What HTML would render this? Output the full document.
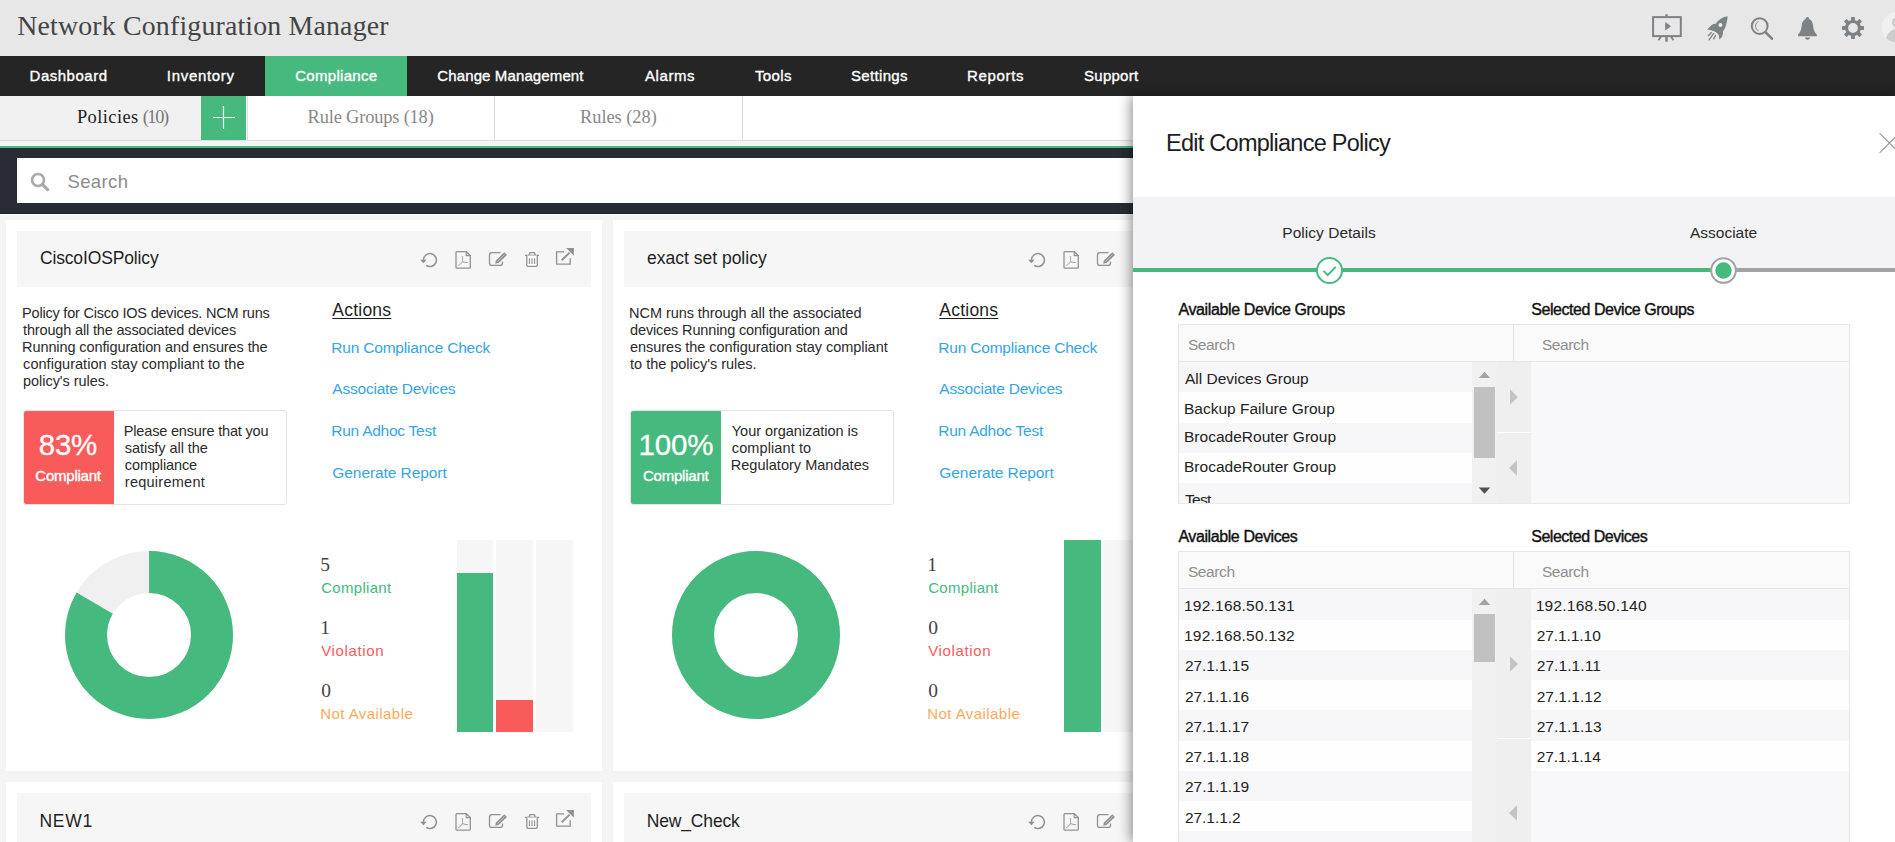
<!DOCTYPE html>
<html lang="en">
<head>
<meta charset="utf-8">
<title>Network Configuration Manager</title>
<style>
*{box-sizing:border-box;margin:0;padding:0}
html,body{width:1895px;height:842px;overflow:hidden}
body{position:relative;background:#f4f4f5;font-family:"Liberation Sans",sans-serif;color:#222;font-size:14px}
.a{position:absolute}
.t{position:absolute;white-space:nowrap;line-height:1}
svg{position:absolute;overflow:visible}
#hdr{left:0;top:0;width:1895px;height:56px;background:#e7e7e8}
#nav{left:0;top:56px;width:1895px;height:40px;background:#252525}
#tabs{left:0;top:96px;width:1133px;height:45px;background:#fff;border-bottom:1px solid #dcdcdc}
.sep{position:absolute;top:0;width:1px;height:44px;background:#dedede}
#strip{left:0;top:141px;width:1133px;height:5px;background:#f5f5f6}
#gline{left:0;top:146px;width:1133px;height:2px;background:#46b97e}
#sbar{left:0;top:148px;width:1133px;height:66px;background:#282c35;border-bottom:1px solid #1d2028;box-shadow:0 1px 0 #fff}
#sbox{left:17px;top:158px;width:1130px;height:45px;background:#fff}
.card{position:absolute;background:#fff;width:596px}
.chead{position:absolute;background:#f6f6f6;height:56px;width:574px}
.cbox{position:absolute;width:264px;height:95px;border:1px solid #e4e4e4;border-radius:3px;background:#fff;overflow:hidden}
.cbox i{position:absolute;left:-1px;top:-1px;width:91px;height:94px;display:block}
.bar{position:absolute;top:540px;width:37px;height:192px;background:#f6f6f6}
.bar.b1{width:36px}
.bar i{position:absolute;left:0;bottom:0;width:100%;display:block}
#panel{left:1133px;top:96px;width:762px;height:746px;background:#fff;box-shadow:-2px 0 12px rgba(0,0,0,.45)}
#steps{left:1133px;top:197px;width:762px;height:73px;background:#f3f3f5}
.dl{position:absolute;left:1178px;width:672px;border:1px solid #e6e6e6;background:#fafafa}
.stripe{position:absolute}
.trk{position:absolute;left:1472px;width:25px;background:#f1f1f1}
.acol{position:absolute;left:1497px;width:34px;background:#efefef}
.thumb{position:absolute;left:1474px;width:21px;background:#c1c1c1}
</style>
</head>
<body>
<header>
<div id="hdr" class="a"></div>
<div class="t" style="left:17.3px;top:10px;line-height:31px;font-size:27.8px;color:#444;font-family:'Liberation Serif',serif;letter-spacing:0.19px;">Network Configuration Manager</div>
<svg style="left:1650px;top:12px" width="34" height="32" viewBox="1650 12 34 32" fill="none" stroke="#7d8285">
<rect x="1653.1" y="17.1" width="27.7" height="19" stroke-width="2"/>
<path d="M1666.5 14.2V16.5M1666.5 37V41.7" stroke-width="2.4"/>
<path d="M1661 36.5L1658.6 40.3M1671 36.5L1673.4 40.3" stroke-width="1.8"/>
<path d="M1665.2 22L1671 26.3L1665.2 30.6Z" fill="#7d8285" stroke="none"/></svg>
<svg style="left:1706px;top:15px" width="23" height="27" viewBox="0 0 23 27">
<path d="M21.6 1.2C18.6 1.6 15.4 3 13.1 5C11.8 6.2 10.7 7.5 9.8 8.7C8.6 8.5 7.4 8.9 6.5 9.6C4.6 10.9 3.2 12.4 1.2 14.8C3.4 14.9 5.6 15.2 7.4 16.1C9.6 16.8 11.4 18.1 12.2 19.6C13.2 21 13.4 22.8 13.1 24.4C14.6 23.6 15.6 22.5 16.2 21.2C16.9 19.6 17.2 17.9 17 16.3C18.3 14.6 19.5 12.1 20.2 9.4C20.9 6.6 21.6 3.8 21.6 1.2Z" fill="#7d8285"/>
<circle cx="14.4" cy="10" r="1.9" fill="#f3f3f3"/>
<path d="M5.6 17.1L2.2 21M7.9 18.2L2.7 25.3M9.8 20.1L7.4 24.4" stroke="#7d8285" stroke-width="1.3" fill="none"/></svg>
<svg style="left:1749px;top:15px" width="26" height="27" viewBox="1749 15 26 27" fill="none" stroke="#7d8285">
<circle cx="1759.7" cy="26.05" r="7.9" stroke-width="2"/>
<path d="M1765.4 32.1L1771.9 38.7" stroke-width="2.6" stroke-linecap="round"/>
<path d="M1758.5 21.3C1754.6 23.6 1754.6 28.6 1758.5 31" stroke-width="1"/></svg>
<svg style="left:1796px;top:15px" width="23" height="27" viewBox="1796 15 23 27">
<path d="M1807.4 17C1806.2 17 1805.5 17.9 1805.6 19C1803.2 20 1802 22.6 1801.7 25.5C1801.4 29 1800.9 31.8 1798 34.4V36.3H1816.8V34.4C1813.9 31.8 1813.4 29 1813.1 25.5C1812.8 22.6 1811.6 20 1809.2 19C1809.3 17.9 1808.6 17 1807.4 17Z" fill="#7d8285"/>
<path d="M1805 37.4H1809.9C1809.9 38.7 1808.8 39.7 1807.45 39.7C1806.1 39.7 1805 38.7 1805 37.4Z" fill="#7d8285"/></svg>
<svg style="left:1840px;top:15px" width="26" height="26" viewBox="1840 15 26 26"><g transform="translate(1853 28)" fill="#7d8285"><rect x="-1.90" y="-11.00" width="3.8" height="4.20" rx="0.6" transform="rotate(0.0)"/><rect x="-1.90" y="-11.00" width="3.8" height="4.20" rx="0.6" transform="rotate(45.0)"/><rect x="-1.90" y="-11.00" width="3.8" height="4.20" rx="0.6" transform="rotate(90.0)"/><rect x="-1.90" y="-11.00" width="3.8" height="4.20" rx="0.6" transform="rotate(135.0)"/><rect x="-1.90" y="-11.00" width="3.8" height="4.20" rx="0.6" transform="rotate(180.0)"/><rect x="-1.90" y="-11.00" width="3.8" height="4.20" rx="0.6" transform="rotate(225.0)"/><rect x="-1.90" y="-11.00" width="3.8" height="4.20" rx="0.6" transform="rotate(270.0)"/><rect x="-1.90" y="-11.00" width="3.8" height="4.20" rx="0.6" transform="rotate(315.0)"/><path fill-rule="evenodd" d="M-8 0A8 8 0 1 0 8 0A8 8 0 1 0 -8 0ZM-4.9 0A4.9 4.9 0 1 1 4.9 0A4.9 4.9 0 1 1 -4.9 0Z"/></g></svg>
<svg style="left:1880px;top:11px" width="15" height="33" viewBox="1880 11 15 33"><defs><clipPath id="av"><circle cx="1896.7" cy="27.3" r="15.1"/></clipPath></defs>
<circle cx="1896.7" cy="27.3" r="15.1" fill="#f0f0f0"/><g clip-path="url(#av)" fill="#cdcdce"><circle cx="1896.7" cy="22.5" r="4.8"/><ellipse cx="1896.7" cy="40.6" rx="10.9" ry="11.6"/></g></svg>
</header>
<nav>
<div id="nav" class="a"><div class="a" style="left:265px;top:0;width:142px;height:40px;background:#46b97e"></div></div>
<div class="t" style="left:29.6px;top:67px;line-height:17px;font-size:15px;color:#fff;letter-spacing:0.5px;-webkit-text-stroke:0.35px #fff;">Dashboard</div>
<div class="t" style="left:166.8px;top:67px;line-height:17px;font-size:15px;color:#fff;letter-spacing:0.69px;-webkit-text-stroke:0.35px #fff;">Inventory</div>
<div class="t" style="left:295.2px;top:67px;line-height:17px;font-size:15px;color:#fff;letter-spacing:0.3px;-webkit-text-stroke:0.35px #fff;">Compliance</div>
<div class="t" style="left:437.3px;top:67px;line-height:17px;font-size:15px;color:#fff;letter-spacing:0.12px;-webkit-text-stroke:0.35px #fff;">Change Management</div>
<div class="t" style="left:645.0px;top:67px;line-height:17px;font-size:15px;color:#fff;letter-spacing:0.57px;-webkit-text-stroke:0.35px #fff;">Alarms</div>
<div class="t" style="left:755.0px;top:67px;line-height:17px;font-size:15px;color:#fff;letter-spacing:0.37px;-webkit-text-stroke:0.35px #fff;">Tools</div>
<div class="t" style="left:851.0px;top:67px;line-height:17px;font-size:15px;color:#fff;letter-spacing:0.33px;-webkit-text-stroke:0.35px #fff;">Settings</div>
<div class="t" style="left:967.0px;top:67px;line-height:17px;font-size:15px;color:#fff;letter-spacing:0.66px;-webkit-text-stroke:0.35px #fff;">Reports</div>
<div class="t" style="left:1084.0px;top:67px;line-height:17px;font-size:15px;color:#fff;letter-spacing:0.27px;-webkit-text-stroke:0.35px #fff;">Support</div>
</nav>
<main>
<section class="tabbar">
<div id="tabs" class="a"><div class="a" style="left:0;top:0;width:201px;height:44px;background:#f1f1f1"></div><div class="a" style="left:201px;top:0;width:45px;height:44px;background:#46b97e"></div><div class="sep" style="left:247px"></div><div class="sep" style="left:494px"></div><div class="sep" style="left:742px"></div></div>
<svg style="left:201px;top:96px" width="45" height="44" viewBox="0 0 45 44"><path d="M12 21.5H34M22.5 10V33" stroke="#fff" stroke-width="1.2" fill="none"/></svg>
<div class="t" style="left:76.9px;top:107px;line-height:20px;font-size:18.4px;color:#1d1d1d;font-family:'Liberation Serif',serif;letter-spacing:0.45px;">Policies</div>
<div class="t" style="left:142.7px;top:107px;line-height:20px;font-size:18.4px;color:#777;font-family:'Liberation Serif',serif;letter-spacing:-1.44px;">(10)</div>
<div class="t" style="left:307.6px;top:107px;line-height:20px;font-size:18.4px;color:#888;font-family:'Liberation Serif',serif;letter-spacing:-0.17px;">Rule Groups (18)</div>
<div class="t" style="left:580.0px;top:107px;line-height:20px;font-size:18.4px;color:#888;font-family:'Liberation Serif',serif;letter-spacing:-0.04px;">Rules (28)</div>
<div id="strip" class="a"></div><div id="gline" class="a"></div><div id="sbar" class="a"></div><div id="sbox" class="a"></div>
<svg style="left:30px;top:172px" width="20" height="20" viewBox="0 0 20 20" fill="none" stroke="#aaa"><circle cx="8" cy="8" r="6" stroke-width="2.6"/><path d="M12.6 12.6L17.6 17.6" stroke-width="3.2" stroke-linecap="round"/></svg>
<div class="t" style="left:67.5px;top:171px;line-height:21px;font-size:18.5px;color:#8c8c8c;letter-spacing:0.37px;">Search</div>
</section>
<article>
<div class="card" style="left:6px;top:220px;height:551px"></div>
<div class="chead" style="left:17px;top:231px"></div>
<div class="t" style="left:39.9px;top:248px;line-height:20px;font-size:17.5px;color:#1f1f1f;letter-spacing:-0.14px;">CiscoIOSPolicy</div>
<svg style="left:418px;top:246px" width="160" height="26" viewBox="418 246 160 26" fill="none" stroke="#919191" stroke-width="1.3"><path d="M423.4 260A6.5 6.5 0 1 1 426.2 265.4" stroke-width="1.5"/><path d="M420.2 259.8H426.6L423.4 263.3Z" fill="#919191" stroke="none"/><path d="M456 252.6Q456 251.7 456.9 251.7H466.2L470.3 255.6V267.3Q470.3 268.2 469.4 268.2H456.9Q456 268.2 456 267.3Z"/><path d="M466.2 251.7V255.6H470.3" stroke-width="1.1"/><path d="M462.3 256.2C462.6 258.5 462.5 260.4 462.4 261.6C461.4 263.4 460 264.8 458.3 265.6M462.4 261.6C464 262.3 466 262.6 467.8 262.6" stroke-width="0.9"/><path d="M500.5 252.7H492Q489.5 252.7 489.5 255.2V262.9Q489.5 265.4 492 265.4H500Q502.5 265.4 502.5 262.9V261.5"/><path d="M495.2 263.7L495.9 260.4L504.3 252.2L507 254.9L498.6 263Z" fill="#919191" stroke="none"/><path d="M497.4 261.6L504.6 254.6" stroke="#cfcfcf" stroke-width="0.8"/><path d="M525 255.4H539M528.8 255.4L529.9 252.6H534.4L535.5 255.4"/><path d="M526.8 255.4V265Q526.8 266.4 528.2 266.4H535.9Q537.3 266.4 537.3 265V255.4" fill="#fff"/><path d="M529.4 258.2V263.9M532 258.2V263.9M534.6 258.2V263.9" stroke-width="1.1"/><path d="M564 251.8H556.6V264.1H570.2V258.2"/><path d="M561.7 260.3L569.6 252.6" stroke-width="1.9"/><path d="M566.1 248H573.9V255.8Z" fill="#919191" stroke="none"/></svg>
<div class="t" style="left:22.1px;top:305px;line-height:16px;font-size:14.5px;color:#2a2a2a;letter-spacing:-0.21px;">Policy for Cisco IOS devices. NCM runs</div>
<div class="t" style="left:23.1px;top:322px;line-height:16px;font-size:14.5px;color:#2a2a2a;letter-spacing:-0.16px;">through all the associated devices</div>
<div class="t" style="left:22.1px;top:339px;line-height:16px;font-size:14.5px;color:#2a2a2a;letter-spacing:-0.1px;">Running configuration and ensures the</div>
<div class="t" style="left:23.1px;top:356px;line-height:16px;font-size:14.5px;color:#2a2a2a;letter-spacing:0.04px;">configuration stay compliant to the</div>
<div class="t" style="left:23.1px;top:373px;line-height:16px;font-size:14.5px;color:#2a2a2a;letter-spacing:-0.05px;">policy&#x27;s rules.</div>
<div class="t" style="left:332.3px;top:300px;line-height:20px;font-size:17.5px;color:#1f1f1f;letter-spacing:0.23px;text-decoration:underline;text-underline-offset:2px;text-decoration-thickness:1px;">Actions</div>
<div class="t" style="left:331.3px;top:339px;line-height:17px;font-size:15.5px;color:#35a5e6;letter-spacing:-0.2px;">Run Compliance Check</div>
<div class="t" style="left:332.3px;top:380px;line-height:17px;font-size:15.5px;color:#35a5e6;letter-spacing:-0.21px;">Associate Devices</div>
<div class="t" style="left:331.3px;top:422px;line-height:17px;font-size:15.5px;color:#35a5e6;letter-spacing:-0.26px;">Run Adhoc Test</div>
<div class="t" style="left:332.3px;top:464px;line-height:17px;font-size:15.5px;color:#35a5e6;letter-spacing:-0.07px;">Generate Report</div>
<div class="cbox" style="left:23px;top:410px"></div><div class="a" style="left:24px;top:411px;width:90px;height:93px;border-radius:2px 0 0 2px;background:#f95b5b"></div>
<div class="t" style="left:38.8px;top:428px;line-height:33px;font-size:29.5px;color:#fff;letter-spacing:-0.26px;-webkit-text-stroke:0.3px #fff;">83%</div>
<div class="t" style="left:35.3px;top:467px;line-height:17px;font-size:15px;color:#fff;letter-spacing:-0.23px;-webkit-text-stroke:0.4px #fff;">Compliant</div>
<div class="t" style="left:123.8px;top:423px;line-height:16px;font-size:14.5px;color:#2a2a2a;letter-spacing:-0.17px;">Please ensure that you</div>
<div class="t" style="left:124.8px;top:440px;line-height:16px;font-size:14.5px;color:#2a2a2a;letter-spacing:-0.05px;">satisfy all the</div>
<div class="t" style="left:124.8px;top:457px;line-height:16px;font-size:14.5px;color:#2a2a2a;letter-spacing:-0.11px;">compliance</div>
<div class="t" style="left:124.8px;top:474px;line-height:16px;font-size:14.5px;color:#2a2a2a;letter-spacing:0.26px;">requirement</div>
<svg style="left:64.80000000000001px;top:551.2px" width="168" height="168" viewBox="-84 -84 168 168"><circle r="63.0" fill="none" stroke="#f0f0f0" stroke-width="42"/><circle r="63.0" fill="none" stroke="#46b97e" stroke-width="42" stroke-dasharray="329.87 395.84" transform="rotate(-90)"/></svg>
<div class="t" style="left:320.2px;top:554px;line-height:21px;font-size:19.5px;color:#444;font-family:'Liberation Serif',serif;">5</div>
<div class="t" style="left:321.2px;top:579px;line-height:17px;font-size:15px;color:#46b97e;letter-spacing:0.3px;">Compliant</div>
<div class="t" style="left:320.2px;top:617px;line-height:21px;font-size:19.5px;color:#444;font-family:'Liberation Serif',serif;">1</div>
<div class="t" style="left:321.2px;top:642px;line-height:17px;font-size:15px;color:#f95b5b;letter-spacing:0.63px;">Violation</div>
<div class="t" style="left:321.2px;top:680px;line-height:21px;font-size:19.5px;color:#444;font-family:'Liberation Serif',serif;">0</div>
<div class="t" style="left:320.2px;top:705px;line-height:17px;font-size:15px;color:#fbab5b;letter-spacing:0.44px;">Not Available</div>
<div class="bar b1" style="left:457px"><i style="height:159px;background:#46b97e"></i></div>
<div class="bar" style="left:496px"><i style="height:32px;background:#f95b5b"></i></div>
<div class="bar" style="left:536px"><i style="height:0px;background:#46b97e"></i></div>
</article>
<article>
<div class="card" style="left:613px;top:220px;height:551px"></div>
<div class="chead" style="left:624px;top:231px"></div>
<div class="t" style="left:646.9px;top:248px;line-height:20px;font-size:17.5px;color:#1f1f1f;letter-spacing:0.01px;">exact set policy</div>
<svg style="left:1025.6px;top:246px" width="160" height="26" viewBox="418 246 160 26" fill="none" stroke="#919191" stroke-width="1.3"><path d="M423.4 260A6.5 6.5 0 1 1 426.2 265.4" stroke-width="1.5"/><path d="M420.2 259.8H426.6L423.4 263.3Z" fill="#919191" stroke="none"/><path d="M456 252.6Q456 251.7 456.9 251.7H466.2L470.3 255.6V267.3Q470.3 268.2 469.4 268.2H456.9Q456 268.2 456 267.3Z"/><path d="M466.2 251.7V255.6H470.3" stroke-width="1.1"/><path d="M462.3 256.2C462.6 258.5 462.5 260.4 462.4 261.6C461.4 263.4 460 264.8 458.3 265.6M462.4 261.6C464 262.3 466 262.6 467.8 262.6" stroke-width="0.9"/><path d="M500.5 252.7H492Q489.5 252.7 489.5 255.2V262.9Q489.5 265.4 492 265.4H500Q502.5 265.4 502.5 262.9V261.5"/><path d="M495.2 263.7L495.9 260.4L504.3 252.2L507 254.9L498.6 263Z" fill="#919191" stroke="none"/><path d="M497.4 261.6L504.6 254.6" stroke="#cfcfcf" stroke-width="0.8"/><path d="M525 255.4H539M528.8 255.4L529.9 252.6H534.4L535.5 255.4"/><path d="M526.8 255.4V265Q526.8 266.4 528.2 266.4H535.9Q537.3 266.4 537.3 265V255.4" fill="#fff"/><path d="M529.4 258.2V263.9M532 258.2V263.9M534.6 258.2V263.9" stroke-width="1.1"/><path d="M564 251.8H556.6V264.1H570.2V258.2"/><path d="M561.7 260.3L569.6 252.6" stroke-width="1.9"/><path d="M566.1 248H573.9V255.8Z" fill="#919191" stroke="none"/></svg>
<div class="t" style="left:629.1px;top:305px;line-height:16px;font-size:14.5px;color:#2a2a2a;letter-spacing:-0.06px;">NCM runs through all the associated</div>
<div class="t" style="left:630.1px;top:322px;line-height:16px;font-size:14.5px;color:#2a2a2a;letter-spacing:-0.15px;">devices Running configuration and</div>
<div class="t" style="left:630.1px;top:339px;line-height:16px;font-size:14.5px;color:#2a2a2a;letter-spacing:-0.05px;">ensures the configuration stay compliant</div>
<div class="t" style="left:630.1px;top:356px;line-height:16px;font-size:14.5px;color:#2a2a2a;letter-spacing:-0.02px;">to the policy&#x27;s rules.</div>
<div class="t" style="left:939.3px;top:300px;line-height:20px;font-size:17.5px;color:#1f1f1f;letter-spacing:0.23px;text-decoration:underline;text-underline-offset:2px;text-decoration-thickness:1px;">Actions</div>
<div class="t" style="left:938.3px;top:339px;line-height:17px;font-size:15.5px;color:#35a5e6;letter-spacing:-0.2px;">Run Compliance Check</div>
<div class="t" style="left:939.3px;top:380px;line-height:17px;font-size:15.5px;color:#35a5e6;letter-spacing:-0.21px;">Associate Devices</div>
<div class="t" style="left:938.3px;top:422px;line-height:17px;font-size:15.5px;color:#35a5e6;letter-spacing:-0.26px;">Run Adhoc Test</div>
<div class="t" style="left:939.3px;top:464px;line-height:17px;font-size:15.5px;color:#35a5e6;letter-spacing:-0.07px;">Generate Report</div>
<div class="cbox" style="left:630px;top:410px"></div><div class="a" style="left:631px;top:411px;width:90px;height:93px;border-radius:2px 0 0 2px;background:#46b97e"></div>
<div class="t" style="left:638.5px;top:428px;line-height:33px;font-size:29.5px;color:#fff;letter-spacing:-0.14px;-webkit-text-stroke:0.3px #fff;">100%</div>
<div class="t" style="left:643.0px;top:467px;line-height:17px;font-size:15px;color:#fff;letter-spacing:-0.23px;-webkit-text-stroke:0.4px #fff;">Compliant</div>
<div class="t" style="left:731.8px;top:423px;line-height:16px;font-size:14.5px;color:#2a2a2a;letter-spacing:-0.03px;">Your organization is</div>
<div class="t" style="left:731.8px;top:440px;line-height:16px;font-size:14.5px;color:#2a2a2a;letter-spacing:0.1px;">compliant to</div>
<div class="t" style="left:730.8px;top:457px;line-height:16px;font-size:14.5px;color:#2a2a2a;letter-spacing:0.02px;">Regulatory Mandates</div>
<svg style="left:671.8px;top:551.2px" width="168" height="168" viewBox="-84 -84 168 168"><circle r="63.0" fill="none" stroke="#f0f0f0" stroke-width="42"/><circle r="63.0" fill="none" stroke="#46b97e" stroke-width="42" stroke-dasharray="395.84 395.84" transform="rotate(-90)"/></svg>
<div class="t" style="left:927.2px;top:554px;line-height:21px;font-size:19.5px;color:#444;font-family:'Liberation Serif',serif;">1</div>
<div class="t" style="left:928.2px;top:579px;line-height:17px;font-size:15px;color:#46b97e;letter-spacing:0.3px;">Compliant</div>
<div class="t" style="left:928.2px;top:617px;line-height:21px;font-size:19.5px;color:#444;font-family:'Liberation Serif',serif;">0</div>
<div class="t" style="left:928.2px;top:642px;line-height:17px;font-size:15px;color:#f95b5b;letter-spacing:0.63px;">Violation</div>
<div class="t" style="left:928.2px;top:680px;line-height:21px;font-size:19.5px;color:#444;font-family:'Liberation Serif',serif;">0</div>
<div class="t" style="left:927.2px;top:705px;line-height:17px;font-size:15px;color:#fbab5b;letter-spacing:0.44px;">Not Available</div>
<div class="bar" style="left:1064px"><i style="height:192px;background:#46b97e"></i></div>
<div class="bar" style="left:1103px"><i style="height:0px;background:#f95b5b"></i></div>
<div class="bar" style="left:1143px"><i style="height:0px;background:#46b97e"></i></div>
</article>
<div class="card" style="left:6px;top:782px;height:100px"></div>
<div class="chead" style="left:17px;top:793px"></div>
<div class="t" style="left:39.4px;top:811px;line-height:20px;font-size:17.5px;color:#1f1f1f;letter-spacing:0.76px;">NEW1</div>
<svg style="left:418px;top:808px" width="160" height="26" viewBox="418 246 160 26" fill="none" stroke="#919191" stroke-width="1.3"><path d="M423.4 260A6.5 6.5 0 1 1 426.2 265.4" stroke-width="1.5"/><path d="M420.2 259.8H426.6L423.4 263.3Z" fill="#919191" stroke="none"/><path d="M456 252.6Q456 251.7 456.9 251.7H466.2L470.3 255.6V267.3Q470.3 268.2 469.4 268.2H456.9Q456 268.2 456 267.3Z"/><path d="M466.2 251.7V255.6H470.3" stroke-width="1.1"/><path d="M462.3 256.2C462.6 258.5 462.5 260.4 462.4 261.6C461.4 263.4 460 264.8 458.3 265.6M462.4 261.6C464 262.3 466 262.6 467.8 262.6" stroke-width="0.9"/><path d="M500.5 252.7H492Q489.5 252.7 489.5 255.2V262.9Q489.5 265.4 492 265.4H500Q502.5 265.4 502.5 262.9V261.5"/><path d="M495.2 263.7L495.9 260.4L504.3 252.2L507 254.9L498.6 263Z" fill="#919191" stroke="none"/><path d="M497.4 261.6L504.6 254.6" stroke="#cfcfcf" stroke-width="0.8"/><path d="M525 255.4H539M528.8 255.4L529.9 252.6H534.4L535.5 255.4"/><path d="M526.8 255.4V265Q526.8 266.4 528.2 266.4H535.9Q537.3 266.4 537.3 265V255.4" fill="#fff"/><path d="M529.4 258.2V263.9M532 258.2V263.9M534.6 258.2V263.9" stroke-width="1.1"/><path d="M564 251.8H556.6V264.1H570.2V258.2"/><path d="M561.7 260.3L569.6 252.6" stroke-width="1.9"/><path d="M566.1 248H573.9V255.8Z" fill="#919191" stroke="none"/></svg>
<div class="card" style="left:613px;top:782px;height:100px"></div>
<div class="chead" style="left:624px;top:793px"></div>
<div class="t" style="left:646.7px;top:811px;line-height:20px;font-size:17.5px;color:#1f1f1f;letter-spacing:-0.15px;">New_Check</div>
<svg style="left:1025.6px;top:808px" width="160" height="26" viewBox="418 246 160 26" fill="none" stroke="#919191" stroke-width="1.3"><path d="M423.4 260A6.5 6.5 0 1 1 426.2 265.4" stroke-width="1.5"/><path d="M420.2 259.8H426.6L423.4 263.3Z" fill="#919191" stroke="none"/><path d="M456 252.6Q456 251.7 456.9 251.7H466.2L470.3 255.6V267.3Q470.3 268.2 469.4 268.2H456.9Q456 268.2 456 267.3Z"/><path d="M466.2 251.7V255.6H470.3" stroke-width="1.1"/><path d="M462.3 256.2C462.6 258.5 462.5 260.4 462.4 261.6C461.4 263.4 460 264.8 458.3 265.6M462.4 261.6C464 262.3 466 262.6 467.8 262.6" stroke-width="0.9"/><path d="M500.5 252.7H492Q489.5 252.7 489.5 255.2V262.9Q489.5 265.4 492 265.4H500Q502.5 265.4 502.5 262.9V261.5"/><path d="M495.2 263.7L495.9 260.4L504.3 252.2L507 254.9L498.6 263Z" fill="#919191" stroke="none"/><path d="M497.4 261.6L504.6 254.6" stroke="#cfcfcf" stroke-width="0.8"/><path d="M525 255.4H539M528.8 255.4L529.9 252.6H534.4L535.5 255.4"/><path d="M526.8 255.4V265Q526.8 266.4 528.2 266.4H535.9Q537.3 266.4 537.3 265V255.4" fill="#fff"/><path d="M529.4 258.2V263.9M532 258.2V263.9M534.6 258.2V263.9" stroke-width="1.1"/><path d="M564 251.8H556.6V264.1H570.2V258.2"/><path d="M561.7 260.3L569.6 252.6" stroke-width="1.9"/><path d="M566.1 248H573.9V255.8Z" fill="#919191" stroke="none"/></svg>
</main>
<aside>
<div id="panel" class="a"></div><div id="steps" class="a"></div>
<div class="t" style="left:1166.1px;top:130px;line-height:26px;font-size:23.5px;color:#1d1d1d;letter-spacing:-0.75px;">Edit Compliance Policy</div>
<svg style="left:1876px;top:130px" width="19" height="26" viewBox="1876 130 19 26"><path d="M1879.6 133.2L1899.2 152.8M1879.6 152.8L1899.2 133.2" stroke="#9a9a9a" stroke-width="1.1" fill="none"/></svg>
<div class="t" style="left:1282.3px;top:224px;line-height:17px;font-size:15.5px;color:#2a2a2a;letter-spacing:0.03px;">Policy Details</div>
<div class="t" style="left:1690.0px;top:224px;line-height:17px;font-size:15.5px;color:#2a2a2a;letter-spacing:-0.01px;">Associate</div>
<div class="a" style="left:1133px;top:268px;width:590px;height:4px;background:#46b97e"></div><div class="a" style="left:1723px;top:268px;width:172px;height:4px;background:#a3a3a3"></div>
<svg style="left:1315px;top:256px" width="29" height="29" viewBox="-14.5 -14.5 29 29"><circle r="12.5" fill="#fff" stroke="#46b97e" stroke-width="2"/><path d="M-6 0.4L-1.8 4.6L6.2 -3.6" fill="none" stroke="#46b97e" stroke-width="2"/></svg>
<svg style="left:1709px;top:256px" width="29" height="29" viewBox="-14.5 -14.5 29 29"><circle r="12.3" fill="#fff" stroke="#a3a3a3" stroke-width="2"/><circle r="8.2" fill="#46b97e"/></svg>
<div class="a" style="left:1133px;top:96px;width:762px;height:407px;overflow:hidden"><div class="a" style="left:-1133px;top:-96px;width:1895px;height:842px">
<div class="t" style="left:1178.4px;top:301px;line-height:17px;font-size:16px;color:#111;letter-spacing:-0.37px;-webkit-text-stroke:0.4px #111;">Available Device Groups</div>
<div class="t" style="left:1531.2px;top:301px;line-height:17px;font-size:16px;color:#111;letter-spacing:-0.44px;-webkit-text-stroke:0.4px #111;">Selected Device Groups</div>
<div class="dl" style="top:324px;height:180px"></div>
<div class="a" style="left:1178px;top:361px;width:672px;height:1px;background:#e6e6e6"></div>
<div class="a" style="left:1513px;top:324px;width:1px;height:37px;background:#e6e6e6"></div>
<div class="t" style="left:1187.9px;top:336px;line-height:17px;font-size:15.5px;color:#8e8e8e;letter-spacing:-0.4px;">Search</div>
<div class="t" style="left:1541.9px;top:336px;line-height:17px;font-size:15.5px;color:#8e8e8e;letter-spacing:-0.4px;">Search</div>
<div class="a" style="left:1531px;top:362px;width:318px;height:142px;background:#f8f8fa"></div>
<div class="stripe" style="left:1179px;top:362px;width:293px;height:152.0px;background:linear-gradient(180deg,#f7f7f9 0.0px,#f7f7f9 30.0px,#fefefe 30.0px,#fefefe 60.7px,#f7f7f9 60.7px,#f7f7f9 90.8px,#fefefe 90.8px,#fefefe 121.5px,#f7f7f9 121.5px,#f7f7f9 152.0px)"></div>
<div class="trk" style="top:362px;height:142px"></div><div class="acol" style="top:362px;height:142px"></div>
<div class="thumb" style="top:387.4px;height:70.30000000000001px"></div>
<svg style="left:1478px;top:371px" width="13" height="8" viewBox="0 0 13 8"><path d="M0.8 7L6.5 0.8L12.2 7Z" fill="#a3a3a3"/></svg>
<svg style="left:1478px;top:487px" width="13" height="8" viewBox="0 0 13 8"><path d="M0.8 0.5L6.5 6.7L12.2 0.5Z" fill="#505050"/></svg>
<div class="a" style="left:1497px;top:432px;width:34px;height:1px;background:#fff"></div>
<svg style="left:1509px;top:388.4px" width="10" height="18" viewBox="0 0 10 18"><path d="M1 1.2L9 9L1 16.8Z" fill="#c4c4c4"/></svg>
<svg style="left:1508px;top:458.5px" width="10" height="18" viewBox="0 0 10 18"><path d="M9 1.2L1 9L9 16.8Z" fill="#c4c4c4"/></svg>
<div class="t" style="left:1185.0px;top:370px;line-height:17px;font-size:15.5px;color:#222;letter-spacing:-0.02px;">All Devices Group</div>
<div class="t" style="left:1184.0px;top:400px;line-height:17px;font-size:15.5px;color:#222;">Backup Failure Group</div>
<div class="t" style="left:1184.0px;top:428px;line-height:17px;font-size:15.5px;color:#222;letter-spacing:0.02px;">BrocadeRouter Group</div>
<div class="t" style="left:1184.0px;top:458px;line-height:17px;font-size:15.5px;color:#222;letter-spacing:0.02px;">BrocadeRouter Group</div>
<div class="t" style="left:1185.0px;top:491px;line-height:17px;font-size:15.5px;color:#222;letter-spacing:-0.71px;">Test</div>
</div></div>
<div class="a" style="left:1178px;top:503px;width:672px;height:1px;background:#eaeaea"></div>
<div class="t" style="left:1178.4px;top:528px;line-height:17px;font-size:16px;color:#111;letter-spacing:-0.41px;-webkit-text-stroke:0.4px #111;">Available Devices</div>
<div class="t" style="left:1531.2px;top:528px;line-height:17px;font-size:16px;color:#111;letter-spacing:-0.47px;-webkit-text-stroke:0.4px #111;">Selected Devices</div>
<div class="dl" style="top:551px;height:340px"></div>
<div class="a" style="left:1178px;top:588px;width:672px;height:1px;background:#e6e6e6"></div>
<div class="a" style="left:1513px;top:551px;width:1px;height:37px;background:#e6e6e6"></div>
<div class="t" style="left:1187.9px;top:563px;line-height:17px;font-size:15.5px;color:#8e8e8e;letter-spacing:-0.4px;">Search</div>
<div class="t" style="left:1541.9px;top:563px;line-height:17px;font-size:15.5px;color:#8e8e8e;letter-spacing:-0.4px;">Search</div>
<div class="a" style="left:1531px;top:589px;width:318px;height:302px;background:#f8f8fa"></div>
<div class="stripe" style="left:1179px;top:589px;width:293px;height:303.0px;background:linear-gradient(180deg,#f7f7f9 0.0px,#f7f7f9 30.6px,#fefefe 30.6px,#fefefe 60.9px,#f7f7f9 60.9px,#f7f7f9 91.1px,#fefefe 91.1px,#fefefe 121.3px,#f7f7f9 121.3px,#f7f7f9 151.6px,#fefefe 151.6px,#fefefe 181.7px,#f7f7f9 181.7px,#f7f7f9 211.8px,#fefefe 211.8px,#fefefe 241.8px,#f7f7f9 241.8px,#f7f7f9 272.0px,#fefefe 272.0px,#fefefe 303.0px)"></div>
<div class="stripe" style="left:1531px;top:589px;width:318px;height:181.7px;background:linear-gradient(180deg,#f7f7f9 0.0px,#f7f7f9 30.6px,#fefefe 30.6px,#fefefe 60.9px,#f7f7f9 60.9px,#f7f7f9 91.1px,#fefefe 91.1px,#fefefe 121.3px,#f7f7f9 121.3px,#f7f7f9 151.6px,#fefefe 151.6px,#fefefe 181.7px)"></div>
<div class="trk" style="top:589px;height:302px"></div><div class="acol" style="top:589px;height:302px"></div>
<div class="thumb" style="top:614px;height:47.799999999999955px"></div>
<svg style="left:1478px;top:598px" width="13" height="8" viewBox="0 0 13 8"><path d="M0.8 7L6.5 0.8L12.2 7Z" fill="#a3a3a3"/></svg>
<div class="a" style="left:1497px;top:738px;width:34px;height:1px;background:#fff"></div>
<svg style="left:1509px;top:655px" width="10" height="18" viewBox="0 0 10 18"><path d="M1 1.2L9 9L1 16.8Z" fill="#c4c4c4"/></svg>
<svg style="left:1508px;top:804px" width="10" height="18" viewBox="0 0 10 18"><path d="M9 1.2L1 9L9 16.8Z" fill="#c4c4c4"/></svg>
<div class="t" style="left:1184.0px;top:597px;line-height:17px;font-size:15.5px;color:#222;letter-spacing:0.22px;">192.168.50.131</div>
<div class="t" style="left:1184.0px;top:627px;line-height:17px;font-size:15.5px;color:#222;letter-spacing:0.22px;">192.168.50.132</div>
<div class="t" style="left:1185.0px;top:657px;line-height:17px;font-size:15.5px;color:#222;letter-spacing:-0.08px;">27.1.1.15</div>
<div class="t" style="left:1185.0px;top:688px;line-height:17px;font-size:15.5px;color:#222;letter-spacing:-0.05px;">27.1.1.16</div>
<div class="t" style="left:1185.0px;top:718px;line-height:17px;font-size:15.5px;color:#222;letter-spacing:-0.08px;">27.1.1.17</div>
<div class="t" style="left:1185.0px;top:748px;line-height:17px;font-size:15.5px;color:#222;letter-spacing:-0.05px;">27.1.1.18</div>
<div class="t" style="left:1185.0px;top:778px;line-height:17px;font-size:15.5px;color:#222;letter-spacing:-0.05px;">27.1.1.19</div>
<div class="t" style="left:1185.0px;top:809px;line-height:17px;font-size:15.5px;color:#222;letter-spacing:-0.06px;">27.1.1.2</div>
<div class="t" style="left:1535.7px;top:597px;line-height:17px;font-size:15.5px;color:#222;letter-spacing:0.24px;">192.168.50.140</div>
<div class="t" style="left:1536.7px;top:627px;line-height:17px;font-size:15.5px;color:#222;letter-spacing:-0.07px;">27.1.1.10</div>
<div class="t" style="left:1536.7px;top:657px;line-height:17px;font-size:15.5px;color:#222;letter-spacing:0.08px;">27.1.1.11</div>
<div class="t" style="left:1536.7px;top:688px;line-height:17px;font-size:15.5px;color:#222;letter-spacing:0.03px;">27.1.1.12</div>
<div class="t" style="left:1536.7px;top:718px;line-height:17px;font-size:15.5px;color:#222;letter-spacing:0.03px;">27.1.1.13</div>
<div class="t" style="left:1536.7px;top:748px;line-height:17px;font-size:15.5px;color:#222;letter-spacing:-0.07px;">27.1.1.14</div>
</aside>
</body>
</html>
